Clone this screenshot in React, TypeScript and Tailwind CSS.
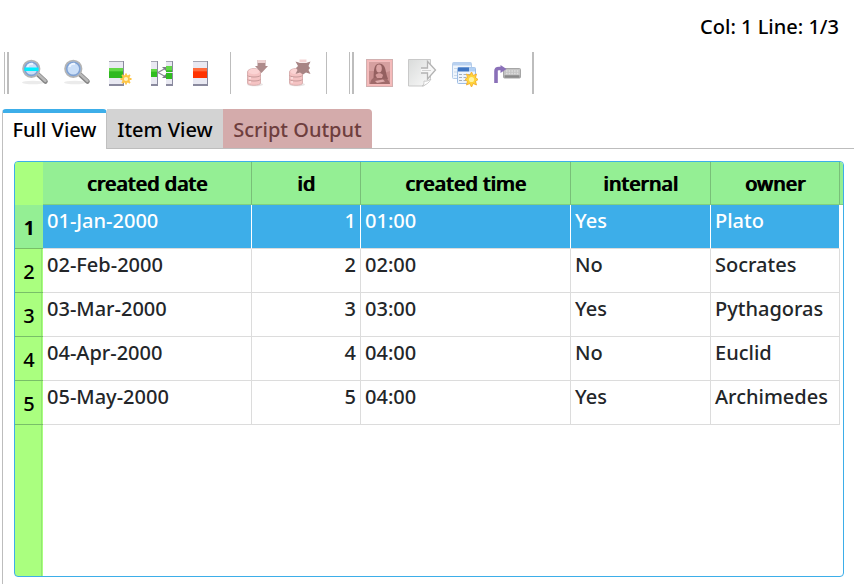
import React from 'react';
import clsx from 'clsx';

interface Row {
  date: string;
  id: number;
  time: string;
  internal: string;
  owner: string;
}

const rows: Row[] = [
  { date: '01-Jan-2000', id: 1, time: '01:00', internal: 'Yes', owner: 'Plato' },
  { date: '02-Feb-2000', id: 2, time: '02:00', internal: 'No', owner: 'Socrates' },
  { date: '03-Mar-2000', id: 3, time: '03:00', internal: 'Yes', owner: 'Pythagoras' },
  { date: '04-Apr-2000', id: 4, time: '04:00', internal: 'No', owner: 'Euclid' },
  { date: '05-May-2000', id: 5, time: '04:00', internal: 'Yes', owner: 'Archimedes' },
];

const columns = ['created date', 'id', 'created time', 'internal', 'owner'];

const Icon = ({ children }: { children: React.ReactNode }) => (
  <svg viewBox="0 0 28 28" className="size-7 overflow-visible" aria-hidden="true">
    {children}
  </svg>
);

const Magnifier = ({ band }: { band?: boolean }) => (
  <Icon>
    <ellipse cx="12" cy="23.5" rx="11" ry="1.8" fill="#ebebeb" />
    <path d="M17 15.500 24.5 22.500" stroke="#858585" strokeWidth="4.600" strokeLinecap="round" />
    <path d="M17 15 24.5 22" stroke="#b9b9b9" strokeWidth="2.400" strokeLinecap="round" />
    <circle cx="10.3" cy="9.8" r="8.200" fill="#c3d8f5" stroke="#b4b4b4" strokeWidth="1.800" />
    <circle cx="10.3" cy="9.8" r="6.6" fill="#cbdff8" stroke="#7fa1d2" strokeWidth="1.6" />
    <path d="M6.500 8c.5-2.500 3-3.500 5.500-3" stroke="#eef5ff" strokeWidth="2" fill="none" />
    {band && <rect x="3.500" y="8.500" width="14" height="3.500" fill="#00eeff" />}
  </Icon>
);

const Spark = ({ x, y, fill }: { x: number; y: number; fill: string }) => (
  <g transform={`translate(${x} ${y})`}>
    <path
      d="M0-7.500 1.700-4 5-5.500 4-2 6.500 0 4 2 5 5.500 1.700 4 0 7.500-1.700 4-5 5.500-4 2-6.500 0-4-2-5-5.500-1.700-4Z"
      fill={fill}
      stroke="#f5ae2a"
      strokeWidth="0.9"
    />
    <circle r="2.600" fill="#fff3a0" />
  </g>
);

const Block = ({ x, w, y, h, color, light }: { x: number; w: number; y: number; h: number; color: string; light: string }) => (
  <>
    <rect x={x} y="2" width={w} height="25" fill="#e9e9f2" />
    <path d={`M${x} 2.500h${w}`} stroke="#a5a5b2" />
    <rect x={x} y={y} width={w} height={h} fill={light} />
    <rect x={x} y={y + h / 3} width={w} height={(h * 2) / 3} fill={color} />
    <path d={`M${x} 26h${w}`} stroke="#8a8a9e" strokeWidth="2" />
    <path d={`M${x + w - 0.5} 2v25`} stroke="#8a8a9e" />
  </>
);

const InsertRow = () => (
  <Icon>
    <Block x={4} w={15} y={9} h={10} color="#2fb91f" light="#62d847" />
    <circle cx="21" cy="20" r="3" fill="#fff3c0" stroke="#ffc545" strokeWidth="1.800" />
    <path
      d="M21 14.500v2M21 23.500v2M15.500 20h2M24.500 20h2M17 16l1.500 1.500M23.500 22.500 25 24M25 16l-1.500 1.500M18.500 22.500 17 24"
      stroke="#ffc545"
      strokeWidth="1.800"
    />
  </Icon>
);

const DuplicateRow = () => (
  <Icon>
    <Block x={4} w={7} y={10} h={8} color="#30bd20" light="#62d847" />
    <Block x={19} w={7} y={7} h={13} color="#30bd20" light="#62d847" />
    <path d="M19 13.500h7" stroke="#e9e9f2" />
    <path d="M11 13.500 19 9M11 13.500 19 18" stroke="#8a8a96" strokeWidth="1.200" />
    <path d="M15 8h4v4zM15 19h4v-4z" fill="#7b7b88" />
  </Icon>
);

const DeleteRow = () => (
  <Icon>
    <Block x={4} w={15} y={9} h={10} color="#ff3200" light="#ff6a3c" />
  </Icon>
);

const Cylinder = () => (
  <>
    <ellipse cx="12" cy="25.5" rx="8" ry="1.8" fill="#e8e4e4" />
    <path d="M4.500 13c0-4.500 13-4.500 13 0v11c0 3-13 3-13 0z" fill="#f5c3c3" stroke="#d9b0b0" />
    <ellipse cx="11" cy="12.500" rx="5.500" ry="2.800" fill="#fbd3d3" />
    <path d="M4.500 16.500c2 2 11 2 13 0M4.500 20.500c2 2 11 2 13 0" fill="none" stroke="#c79a9a" />
    <path d="M7 18v2M7 22v2" stroke="#fbdada" strokeWidth="2" />
  </>
);

const Commit = () => (
  <Icon>
    <Cylinder />
    <path d="M14.500 1h8v6H25l-6.500 7L12 7h2.500z" fill="#ae8b8b" />
    <path d="M14.500 1h8v3h-8z" fill="#eed2d2" />
  </Icon>
);

const Rollback = () => (
  <Icon>
    <Cylinder />
    <path d="m10.500 2.500 4.500 1.500h6l4.500-1.500L23.500 7l1.500 2-1.500 2 2 4-4.500-1.500-3 2-3-2-4.500 1.500 2-4L11 9l2-2z" fill="#a88484" />
    <path d="M14.500 0.500h7v3h-7z" fill="#f3d2d2" />
  </Icon>
);

const Portrait = () => (
  <Icon>
    <rect x="0.5" y="0.5" width="26" height="27" fill="#f6b8b8" stroke="#d1b0b0" />
    <rect x="2.500" y="2.500" width="22" height="23" fill="#d6a0a0" stroke="#f2bebe" />
    <path d="M3 12h5l2 2h8l6-2v13H3z" fill="#c88e8e" />
    <path d="M7.500 20C8 14 7 4.500 13.500 4.500 20.500 5 19 13 22 20l-4 3H9z" fill="#946060" />
    <ellipse cx="13" cy="9.500" rx="2.800" ry="4" fill="#dba4a4" />
    <path d="M9.500 16c2-2.500 6-2.500 7.500 0l-1 3H11z" fill="#d39a9a" />
    <path d="M4 25c1-5 3-7 6-6l6 1c4-1 7 0 8 5z" fill="#a06a6a" />
    <path d="m9 22 8-1.500 2 2-8 1.500z" fill="#deabab" />
  </Icon>
);

const ExportPage = () => (
  <Icon>
    <defs>
      <linearGradient id="page" x1="0" y1="0" x2="1" y2="1">
        <stop offset="0" stopColor="#d9dbda" />
        <stop offset="1" stopColor="#fafafa" />
      </linearGradient>
    </defs>
    <path d="M0.500 0.500h22v19c-1 3-4 5-7 7.500h-15z" fill="url(#page)" stroke="#c9c9c9" />
    <path d="M14 27c2-1 2-3 2-5 3 1 5-1 7-2-2 4-5 6-9 7z" fill="#fff" stroke="#c2c2c2" strokeWidth="0.8" />
    <path d="M13 9h6.500V2.500L27.500 11 19.500 20v-6H13" fill="#f7f7f7" stroke="#b3b3b3" strokeWidth="1.300" />
    <path d="M14 11.500h9" stroke="#d2d2d2" />
  </Icon>
);

const NewForm = () => (
  <Icon>
    <rect x="2.500" y="3.500" width="19" height="16" rx="1" fill="#eff5fc" stroke="#b5cce9" />
    <path d="M3 5h18" stroke="#b8d1f0" strokeWidth="3" />
    <path d="M4 9.500h16M4 13h16M4 16.500h16" stroke="#cbdaea" strokeDasharray="4 1.500" />
    <rect x="7.500" y="8.500" width="18" height="16" rx="1" fill="#eef4fc" stroke="#9dbde5" />
    <path d="M8 10.500h11" stroke="#3f75c2" strokeWidth="4" />
    <path d="M19 10.500h6" stroke="#b2d0f3" strokeWidth="4" />
    <path d="M9 15.500h12M9 18.500h12M9 21.500h12" stroke="#a5afbb" strokeWidth="1.200" strokeDasharray="3 1.500" />
    <Spark x={21.5} y={20.5} fill="#ffd43a" />
  </Icon>
);

const Shortcut = () => (
  <Icon>
    <rect x="11.500" y="9.500" width="17" height="9.500" rx="1" fill="#c4c4c4" stroke="#a6a6a6" />
    <path d="M12.500 17.500h15" stroke="#8a8a8a" strokeWidth="2.500" />
    <path d="M14 12h13M14 14.500h13" stroke="#dedede" strokeWidth="1.300" strokeDasharray="1.500 1.200" />
    <path d="M4 24V12c0-2 1-2.500 3-2.500h3" fill="none" stroke="#8a70b8" strokeWidth="3.600" />
    <path d="m8.500 6 6 4-6 4z" fill="#8a70b8" />
  </Icon>
);

const ToolButton = ({ label, disabled, children }: { label: string; disabled?: boolean; children: React.ReactNode }) => (
  <button type="button" aria-label={label} disabled={disabled} className="flex size-[42px] items-center justify-center">
    {children}
  </button>
);

const Handle = () => (
  <div className="mr-[5px] flex h-[42px] gap-[2px]">
    <div className="w-px bg-[#bdbdbd]" />
    <div className="w-[2px] bg-[#bdbdbd]" />
  </div>
);

const Separator = () => <div className="mr-[5px] ml-[6px] h-[42px] w-px bg-[#bdbdbd]" />;

export default function App() {
  const [selected, setSelected] = React.useState(0);

  return (
    <div className="flex min-h-screen flex-col bg-white font-['Noto_Sans',sans-serif] text-[20px] leading-7 font-medium text-black">
      <div className="flex h-[52px] items-center justify-end pt-[2px] pr-[15px]">Col: 1 Line: 1/3</div>

      <div className="flex h-[42px] items-center pl-1" role="toolbar">
        <Handle />
        <ToolButton label="Zoom row"><Magnifier band /></ToolButton>
        <ToolButton label="Zoom"><Magnifier /></ToolButton>
        <ToolButton label="Insert row"><InsertRow /></ToolButton>
        <ToolButton label="Duplicate row"><DuplicateRow /></ToolButton>
        <ToolButton label="Delete row"><DeleteRow /></ToolButton>
        <Separator />
        <ToolButton label="Commit" disabled><Commit /></ToolButton>
        <ToolButton label="Rollback" disabled><Rollback /></ToolButton>
        <Separator />
        <div className="w-[17px]" />
        <Handle />
        <ToolButton label="Picture" disabled><Portrait /></ToolButton>
        <ToolButton label="Export"><ExportPage /></ToolButton>
        <ToolButton label="New form"><NewForm /></ToolButton>
        <ToolButton label="Shortcut"><Shortcut /></ToolButton>
        <div className="ml-[5px] h-[42px] w-[2px] bg-[#bdbdbd]" />
      </div>

      <div className="mt-[15px] flex h-10 pl-[2px]" role="tablist">
        <button
          type="button"
          role="tab"
          aria-selected="true"
          className="w-[105px] rounded-t-[4px] border-x border-t-[4px] border-x-[#c0c0c0] border-t-[#3daee9] pb-[2px] whitespace-nowrap"
        >
          Full View
        </button>
        <button type="button" role="tab" aria-selected="false" className="w-[116px] border-b border-[#bdbdbd] bg-[#d3d3d3] pt-[2px] whitespace-nowrap">
          Item View
        </button>
        <button
          type="button"
          role="tab"
          aria-selected="false"
          disabled
          className="w-[149px] rounded-tr-[4px] border-b border-[#bdbdbd] bg-[#d4abab] pt-[2px] whitespace-nowrap text-[#6e3e3e]"
        >
          Script Output
        </button>
        <div className="flex-1 border-b border-[#bdbdbd]" />
      </div>

      <div className="ml-[2px] flex flex-1 flex-col border-l border-[#bdbdbd] pt-3 pr-[10px] pb-[7px] pl-[11px]">
        <div className="flex-1 overflow-hidden rounded-[4px] border border-[#3daee9] bg-[linear-gradient(to_right,#aaff7f_26px,#92e673_26px,#92e673_27px,#aaff7f_27px,#aaff7f_28px,#fff_28px)]">
          <table className="w-full table-fixed border-separate border-spacing-0">
            <colgroup>
              <col className="w-7" />
              <col className="w-[209px]" />
              <col className="w-[109px]" />
              <col className="w-[210px]" />
              <col className="w-[140px]" />
              <col />
              <col className="w-[3px]" />
            </colgroup>
            <thead>
              <tr className="h-[43px]">
                <td className="bg-[#aaff7f]" />
                {columns.map((name) => (
                  <th
                    key={name}
                    scope="col"
                    className="border-r border-b border-r-[#78bf78] border-b-[#80d080] bg-[#94ef94] pt-[2px] font-medium whitespace-nowrap [text-shadow:1px_0_0_currentColor]"
                  >
                    {name}
                  </th>
                ))}
                <td className="border-b border-b-[#80d080] bg-[#94ef94]" />
              </tr>
            </thead>
            <tbody>
              {rows.map((row, i) => {
                const cell = clsx(
                  'border-r border-b border-[#dcdcdc] px-1 pt-[2px] align-top whitespace-nowrap',
                  i === selected ? 'border-r-white bg-[#3daee9] text-white' : 'bg-white text-[#232629]'
                );
                return (
                  <tr key={row.id} className="h-11" onClick={() => setSelected(i)}>
                    <th
                      scope="row"
                      className={clsx(
                        'border-b border-b-[#78bf68] pt-[2px] text-center font-medium',
                        i === selected && 'bg-[#94ef94] [text-shadow:1px_0_0_currentColor]'
                      )}
                    >
                      {i + 1}
                    </th>
                    <td className={cell}>{row.date}</td>
                    <td className={clsx(cell, 'text-right')}>{row.id}</td>
                    <td className={cell}>{row.time}</td>
                    <td className={cell}>{row.internal}</td>
                    <td className={cell}>{row.owner}</td>
                    <td />
                  </tr>
                );
              })}
            </tbody>
          </table>
        </div>
      </div>
    </div>
  );
}
